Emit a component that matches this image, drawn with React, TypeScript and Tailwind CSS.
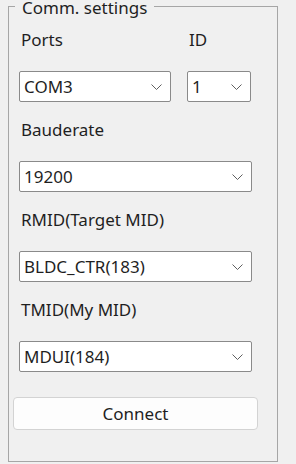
import React from 'react'

const Chevron = () => (
  <svg width="11" height="6" viewBox="0 0 11 6" className="shrink-0">
    <path d="M0.5 0.5 L5.5 5.5 L10.5 0.5" fill="none" stroke="#5f5f5f" strokeWidth="1" />
  </svg>
)

interface ComboProps {
  value: string
  width: string
}

const Combo: React.FC<ComboProps> = ({ value, width }) => (
  <div
    className={`${width} h-[31px] flex items-center justify-between bg-white border border-[#8a8a8a] rounded-[2px] pl-[4px] pr-[8px]`}
  >
    <span className="leading-[20px] text-[#1f1f1f]">{value}</span>
    <Chevron />
  </div>
)

const Label: React.FC<{ text: string }> = ({ text }) => (
  <div className="h-[20px] leading-[20px] pl-[2px] text-[#1f1f1f]">{text}</div>
)

const fields = [
  { label: 'Bauderate', value: '19200' },
  { label: 'RMID(Target MID)', value: 'BLDC_CTR(183)' },
  { label: 'TMID(My MID)', value: 'MDUI(184)' }
]

export default function App() {
  return (
    <div
      className="w-[296px] h-[464px] bg-[#f0f0f0] text-[17px] overflow-hidden pt-[1px]"
      style={{ fontFamily: '"Noto Sans", "Liberation Sans", sans-serif' }}
    >
      <fieldset className="-mt-[3px] ml-[8px] w-[270px] h-[464px] border border-[#a6a6a6]">
        <legend className="ml-[6px] px-[7px] pt-[4px] leading-[12px] text-[#1f1f1f]">Comm. settings</legend>
        <div className="pl-[10px] pt-[16px]">
          <div className="flex gap-[16px]">
            <div className="w-[152px] flex flex-col gap-[21px]">
              <Label text="Ports" />
              <Combo value="COM3" width="w-[152px]" />
            </div>
            <div className="w-[64px] flex flex-col gap-[21px]">
              <Label text="ID" />
              <Combo value="1" width="w-[64px]" />
            </div>
          </div>
          {fields.map(f => (
            <div key={f.label} className="mt-[18px] flex flex-col gap-[21px]">
              <Label text={f.label} />
              <Combo value={f.value} width="w-[233px]" />
            </div>
          ))}
          <button className="mt-[25px] -ml-[6px] w-[245px] h-[33px] bg-[#fdfdfd] border border-[#d3d3d3] rounded-[4px] text-[#1f1f1f] leading-[20px]">
            Connect
          </button>
        </div>
      </fieldset>
    </div>
  )
}
